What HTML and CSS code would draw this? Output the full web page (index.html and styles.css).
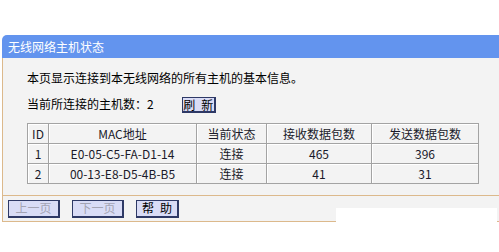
FILE: index.html
```
<!DOCTYPE html>
<html lang="zh-CN">
<head>
<meta charset="utf-8">
<title>无线网络主机状态</title>
<link rel="stylesheet" href="styles.css">
</head>
<body>
<div class="panel">
  <div class="titlebar">无线网络主机状态</div>
  <div class="content">
    <p class="line">本页显示连接到本无线网络的所有主机的基本信息。</p>
    <div class="line count">
      <span>当前所连接的主机数：2</span>
      <button class="btn btn-refresh" type="button">刷&ensp;新</button>
    </div>
    <table class="hosts">
      <colgroup>
        <col class="c-id"><col class="c-mac"><col class="c-st"><col class="c-rx"><col class="c-tx">
      </colgroup>
      <tr><td>ID</td><td>MAC地址</td><td>当前状态</td><td>接收数据包数</td><td>发送数据包数</td></tr>
      <tr><td>1</td><td>E0-05-C5-FA-D1-14</td><td>连接</td><td>465</td><td>396</td></tr>
      <tr><td>2</td><td>00-13-E8-D5-4B-B5</td><td>连接</td><td>41</td><td>31</td></tr>
    </table>
  </div>
  <div class="footer">
    <button class="btn btn-page" type="button" disabled>上一页</button>
    <button class="btn btn-page" type="button" disabled>下一页</button>
    <button class="btn btn-help" type="button">帮&ensp;助</button>
  </div>
  <div class="erase"></div>
</div>
</body>
</html>
```

FILE: styles.css
```
html, body {
  margin: 0;
  padding: 0;
  background: #ffffff;
}
body {
  padding: 35px 0 0 2px;
  font-family: "Noto Sans CJK SC", "Liberation Sans", sans-serif;
  font-size: 12px;
  color: #000;
}
.panel {
  position: relative;
  width: 497px;
}
.titlebar {
  height: 23px;
  line-height: 23px;
  background: #6394ee;
  border-top-left-radius: 5px;
  color: #ffffff;
  padding-left: 6px;
}
.content {
  background: #f3f3f3;
  border-left: 1px solid #dcb98c;
  padding: 10px 0 11px 24px;
}
.line {
  margin: 0;
  height: 20px;
  line-height: 20px;
}
.count {
  margin-top: 6px;
  display: flex;
  align-items: center;
}
.btn {
  font-family: "Noto Sans CJK SC", sans-serif;
  font-size: 12px;
  padding: 0;
  margin: 0;
  background: #d9dcf6;
  border: 1px solid #2e3966;
  border-right-width: 2px;
  border-bottom-width: 2px;
  color: #000;
  line-height: 14px;
  box-sizing: border-box;
  white-space: nowrap;
}
.btn-refresh {
  margin-left: 28px;
  width: 34px;
  height: 16px;
  margin-top: 2px;
}
.hosts {
  margin-top: 9px;
  border-collapse: collapse;
  width: 451px;
  table-layout: fixed;
  color: #1a1a2a;
}
.c-id { width: 21px; }
.c-mac { width: 148px; }
.c-st { width: 70px; }
.c-rx { width: 105px; }
.c-tx { width: 107px; }
.hosts td {
  border: 1px solid #a3a3a3;
  height: 19px;
  padding: 0;
  text-align: center;
  line-height: 19px;
  box-shadow: inset 1px 1px 0 #ffffff;
}
.footer {
  background: #f3f3f3;
  border-left: 1px solid #dcb98c;
  border-top: 1px solid #dcb98c;
  border-bottom: 1px solid #dcb98c;
  height: 25px;
  display: flex;
  align-items: center;
  gap: 12px;
  padding-left: 5px;
}
.btn-page {
  width: 52px;
  height: 18px;
  color: #a4a4b4;
}
.btn-help {
  width: 43px;
  height: 18px;
}
.erase {
  position: absolute;
  left: 334px;
  top: 173px;
  width: 161px;
  height: 17px;
  background: #ffffff;
}
```
